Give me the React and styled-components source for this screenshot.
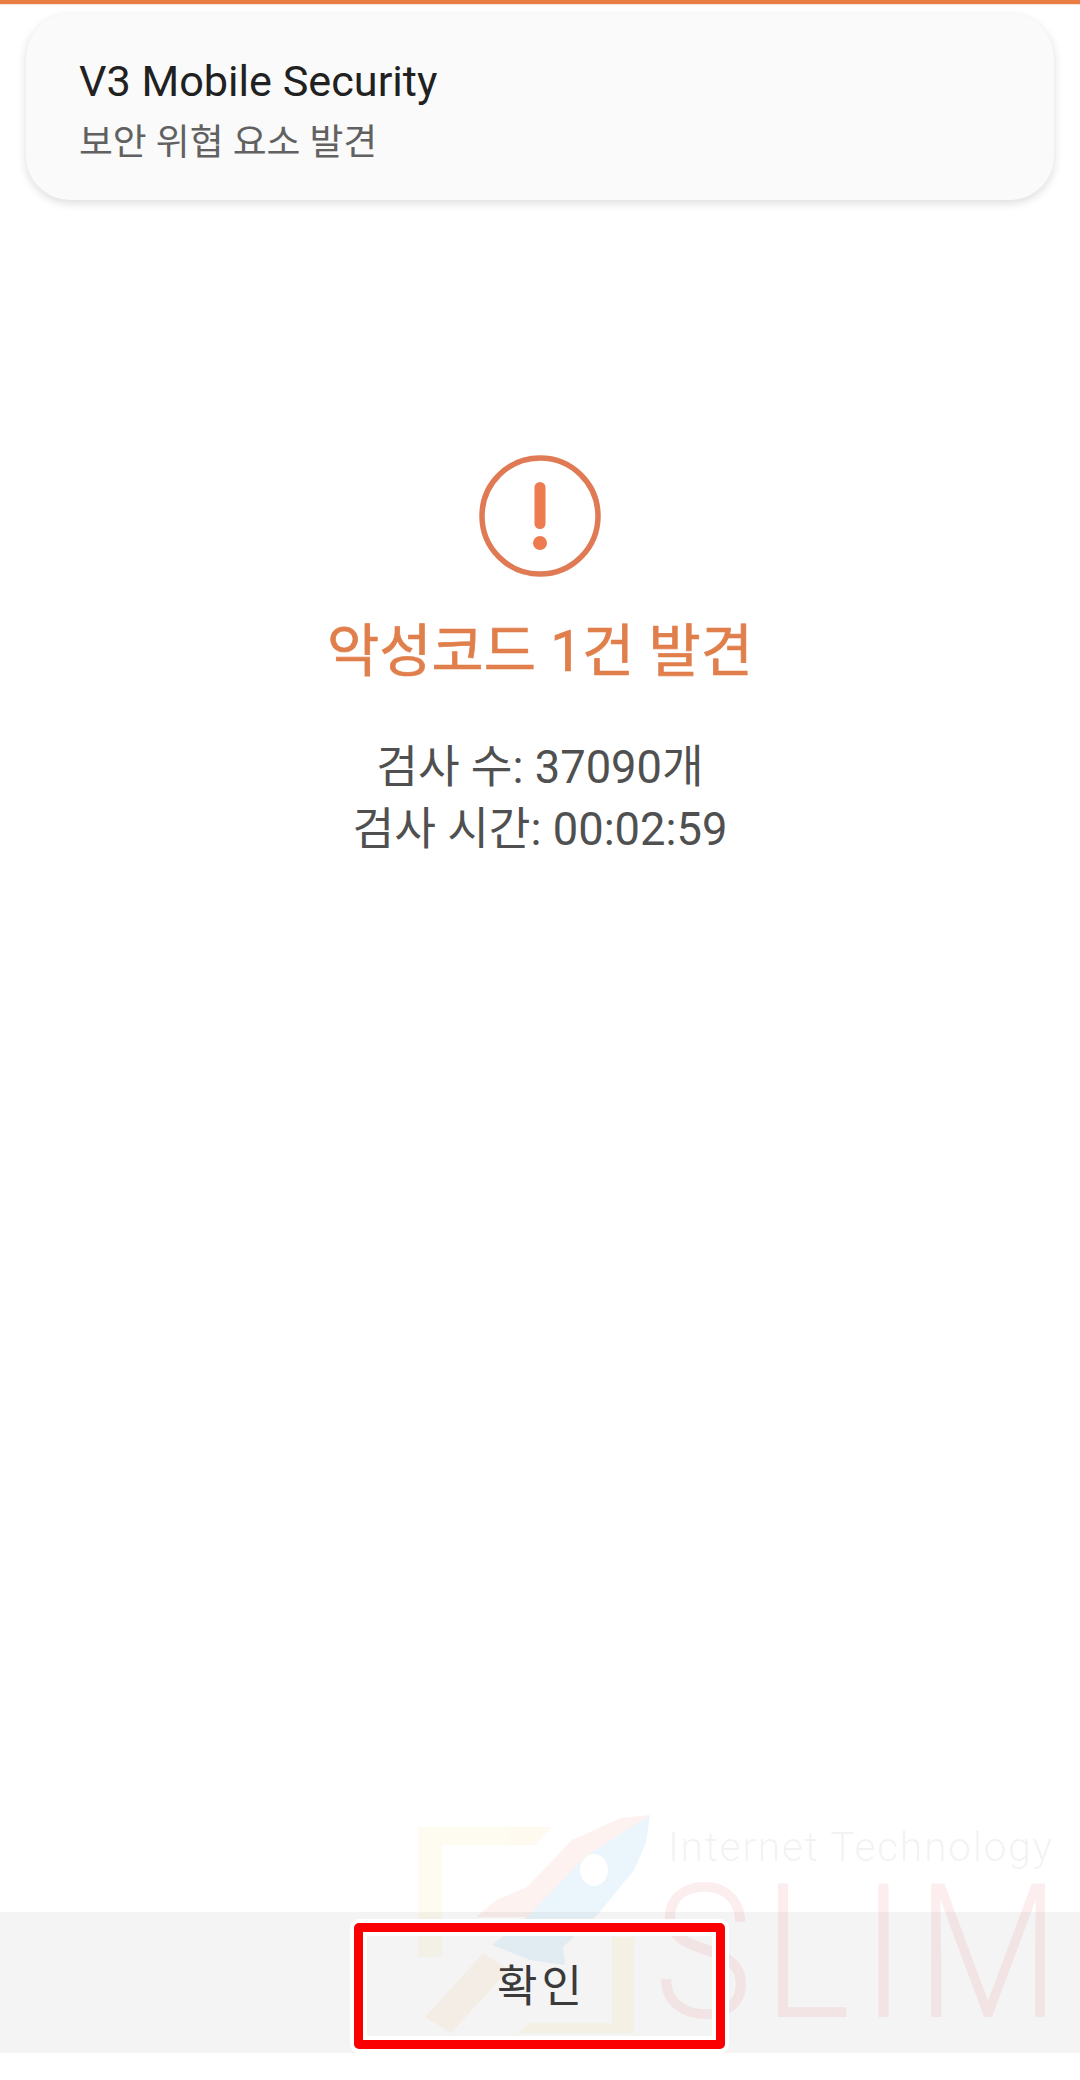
import React from "react";
import styled, { createGlobalStyle } from "styled-components";

const GlobalStyle = createGlobalStyle`
  html, body {
    margin: 0;
    padding: 0;
    background: #fff;
  }
`;

const FONT = `Roboto, "Noto Sans CJK KR", sans-serif`;

const Screen = styled.div`
  position: relative;
  width: 1080px;
  height: 2080px;
  display: flex;
  flex-direction: column;
  overflow: hidden;
  background: #fff;
  font-family: ${FONT};
`;

const ProgressBar = styled.div`
  flex: none;
  height: 4px;
  background: #ea7d41;
  box-shadow: 0 1px 1px #fbe6d6;
`;

const Notice = styled.div`
  flex: none;
  box-sizing: border-box;
  height: 186px;
  margin: 10px 26px 0;
  padding: 7px 54px 0 53px;
  display: flex;
  flex-direction: column;
  justify-content: center;
  gap: 13px;
  background: #fafafa;
  border-radius: 44px;
  box-shadow: 0 3px 10px rgba(0, 0, 0, 0.14);
`;

const NoticeTitle = styled.div`
  font-size: 43.2px;
  line-height: 52px;
  color: #212121;
`;

const NoticeText = styled.div`
  font-size: 36.8px;
  line-height: 44px;
  color: #616161;
`;

const Result = styled.main`
  flex: 1;
  display: flex;
  flex-direction: column;
  align-items: center;
  padding-top: 255px;
`;

const AlertIcon = styled.svg`
  display: block;
  width: 122px;
  height: 122px;
`;

const ResultTitle = styled.h1`
  margin: 37px 0 0;
  font-size: 56.8px;
  line-height: 76px;
  font-weight: 400;
  -webkit-text-stroke: 0.7px #e07f4c;
  color: #e07f4c;
`;

const Stats = styled.div`
  margin-top: 47px;
  text-align: center;
  font-size: 45.3px;
  line-height: 62px;
  color: #505050;
`;

const Footer = styled.footer`
  flex: none;
  height: 141px;
  margin-bottom: 27px;
  display: flex;
  align-items: center;
  justify-content: center;
  background: #f4f4f4;
`;

const ConfirmLabel = styled.span`
  margin-left: 3px;
  font-size: 44px;
  letter-spacing: 4px;
  color: #3a3a3a;
`;

/* annotation drawn over the screenshot */
const Highlight = styled.div`
  position: absolute;
  left: 354px;
  top: 1923px;
  width: 371px;
  height: 126px;
  box-sizing: border-box;
  border: 9px solid #fa0000;
  border-radius: 5px;
  box-shadow: 0 0 0 4px #fff, inset 0 0 0 4px #fff;
`;

const Watermark = styled.div`
  position: absolute;
  left: 400px;
  top: 1810px;
  width: 680px;
  height: 230px;
  pointer-events: none;
`;

const WatermarkLogo = styled.svg`
  position: absolute;
  left: 0;
  top: 0;
  width: 260px;
  height: 230px;
`;

const WatermarkSub = styled.div`
  position: absolute;
  left: 268px;
  top: 12px;
  font-size: 41px;
  line-height: 50px;
  font-weight: 300;
  letter-spacing: 1.6px;
  white-space: nowrap;
  color: rgba(120, 120, 120, 0.09);
`;

const WatermarkName = styled.div`
  position: absolute;
  left: 254px;
  top: 68px;
  font-size: 188px;
  line-height: 150px;
  font-weight: 300;
  letter-spacing: 12px;
  white-space: nowrap;
  transform: scaleX(0.884);
  transform-origin: left center;
  color: rgba(225, 70, 70, 0.09);
`;

export default function App() {
  return (
    <Screen>
      <GlobalStyle />
      <ProgressBar />
      <Notice>
        <NoticeTitle>V3 Mobile Security</NoticeTitle>
        <NoticeText>보안 위협 요소 발견</NoticeText>
      </Notice>
      <Result>
        <AlertIcon viewBox="0 0 122 122">
          <circle cx="61" cy="61" r="58" fill="none" stroke="#e07a55" strokeWidth="5.5" />
          <rect x="55.5" y="27" width="11" height="47" rx="5.5" fill="#ee7a50" />
          <circle cx="61" cy="88" r="7" fill="#ee7a50" />
        </AlertIcon>
        <ResultTitle>악성코드 1건 발견</ResultTitle>
        <Stats>
          검사 수: 37090개
          <br />
          검사 시간: 00:02:59
        </Stats>
      </Result>
      <Footer>
        <ConfirmLabel>확인</ConfirmLabel>
      </Footer>
      <Watermark>
        <WatermarkLogo viewBox="400 1810 260 230">
          <g fill="#f5b400" opacity="0.06">
            <path d="M418 1827H552L535 1845H442V1957H418Z" />
            <path d="M612 1937H634V2033H518L530 2023H612Z" />
          </g>
          <path
            d="M650 1815L621 1818L572 1840L527 1887L496 1900L476 1917L527 1917L585 1857Z"
            fill="#e65a46"
            opacity="0.08"
          />
          <path
            d="M650 1815L646 1843L634 1870L599 1913L563 1947L565 1965L530 1960L492 1945L527 1917L585 1857Z"
            fill="#35a8e0"
            opacity="0.1"
          />
          <ellipse cx="594" cy="1870" rx="14" ry="16" fill="#fff" />
          <path d="M425 2017L483 1953L509 1970L451 2033Z" fill="#f09a3c" opacity="0.07" />
        </WatermarkLogo>
        <WatermarkSub>Internet Technology</WatermarkSub>
        <WatermarkName>SLIM</WatermarkName>
      </Watermark>
      <Highlight />
    </Screen>
  );
}
